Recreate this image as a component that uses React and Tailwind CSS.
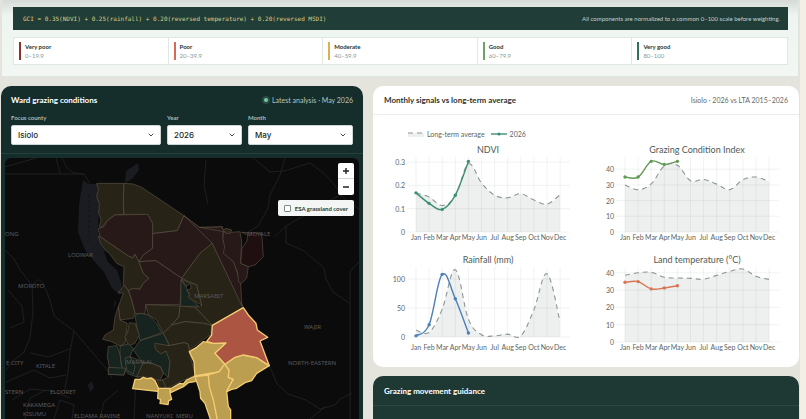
import { ChevronDown } from 'lucide-react';

const CLASSES = [
  { name: 'Very poor', range: '0–19.9', bar: 'bg-[#8f2f2f]' },
  { name: 'Poor', range: '20–39.9', bar: 'bg-[#d96a50]' },
  { name: 'Moderate', range: '40–59.9', bar: 'bg-[#dcb154]' },
  { name: 'Good', range: '60–79.9', bar: 'bg-[#6ba368]' },
  { name: 'Very good', range: '80–100', bar: 'bg-[#2f7159]' },
];

const MONTHS = ['Jan', 'Feb', 'Mar', 'Apr', 'May', 'Jun', 'Jul', 'Aug', 'Sep', 'Oct', 'Nov', 'Dec'];

const CHARTS = [
  {
    title: 'NDVI',
    color: '#3f8f74',
    zero: 89,
    unit: 233,
    ticks: [0, 0.1, 0.2, 0.3],
    average: [0.167, 0.15, 0.114, 0.155, 0.292, 0.21, 0.158, 0.147, 0.164, 0.137, 0.12, 0.16],
    current: [0.168, 0.123, 0.097, 0.158, 0.303],
  },
  {
    title: 'Grazing Condition Index',
    color: '#629a55',
    zero: 89,
    unit: 1.57,
    ticks: [0, 10, 20, 30, 40],
    average: [30, 27, 30.6, 42, 42.5, 32.7, 33.5, 30.5, 27, 33.3, 35, 32],
    current: [35, 35, 45, 43, 45],
  },
  {
    title: 'Rainfall (mm)',
    color: '#4a7fb8',
    zero: 84,
    unit: 0.58,
    ticks: [0, 50, 100],
    average: [12, 8, 48, 116, 31, 4, 2, 5, 2, 47, 109, 26],
    current: [2, 21, 108, 66, 7],
  },
  {
    title: 'Land temperature (°C)',
    color: '#d97552',
    zero: 89,
    unit: 1.73,
    ticks: [0, 10, 20, 30, 40],
    average: [38.6, 40, 40.3, 37.4, 37, 36.8, 36.3, 38.5, 40.8, 42.2, 38, 36.2],
    current: [34.5, 34.9, 30.7, 31.2, 32.5],
  },
];

const OLIVE = '#282317';
const BROWN = '#261917';
const GREEN = '#17231e';

// Ward outlines, drawn at three times the map scale
const WARDS = [
  [OLIVE, '50,40 132,40 130,100 132,133 105,135 88,145 75,160 68,170 58,172 63,150 56,130 58,100 50,80 55,60'],
  [OLIVE, '132,40 160,42 185,52 312,137 292,182 218,191 218,160 203,133 132,133 130,100'],
  [BROWN, '105,135 203,133 218,160 218,235 190,255 177,275 165,253 158,264 145,258 60,200 55,176 72,170 80,155'],
  [BROWN, '312,137 358,172 397,220 360,250 305,325 228,272 177,275 190,255 218,235 218,191 292,182'],
  [OLIVE, '55,198 60,200 145,258 158,264 165,253 177,275 190,310 207,325 190,340 180,358 160,355 145,362 130,345 132,290 110,280 88,250 75,240 62,220'],
  [BROWN, '177,275 228,272 305,325 300,404 197,404 195,432 165,430 155,390 145,362 160,355 180,358 190,340 207,325 190,310'],
  [OLIVE, '397,220 490,412 397,466 345,412 365,408 350,345 305,325 360,250'],
  [BROWN, '312,137 358,172 428,170 430,215 460,270 482,340 486,408 397,220'],
  [BROWN, '358,172 415,172 422,168 428,178 440,188 480,185 485,215 482,280 505,290 500,325 482,342 476,335 472,305 460,275 445,262 430,250 434,230 428,205 432,185'],
  [OLIVE, '430,180 438,175 455,180 450,190 438,190'],
  ['#200f11', '484,187 545,190 550,260 525,285 505,290 482,280 486,235 500,215 504,195'],
  [GREEN, '303,330 318,350 330,380 355,408 302,410'],
  [OLIVE, '305,328 350,345 365,405 340,392 325,382 330,372 320,362 334,355 330,340 318,350'],
  [OLIVE, '197,404 300,408 297,440 275,465 250,490 230,450 205,435'],
  [OLIVE, '300,408 345,412 397,466 370,460 315,455 275,465 297,440'],
  [OLIVE, '315,455 370,460 397,466 390,495 328,540 325,522 312,518 268,527 250,490 275,465'],
  [GREEN, '165,436 180,430 205,435 230,460 245,488 180,512 172,480'],
  [GREEN, '250,490 268,527 225,530 232,545 262,545 270,575 265,622 250,610 242,590 215,580 185,575 160,540 180,512'],
  [OLIVE, '225,520 268,527 312,518 325,522 328,545 342,600 345,615 260,655 245,630 265,622 270,575 258,543 242,552 225,535'],
  [OLIVE, '133,345 145,362 155,390 165,430 160,445 120,450 115,410 130,370 115,368'],
  [OLIVE, '115,410 120,450 142,460 135,520 120,528 95,515 68,508 75,495 100,480 105,440'],
  [OLIVE, '148,458 165,460 178,495 165,520 145,528 135,500 142,490'],
  [GREEN, '85,530 110,527 120,550 125,590 137,595 132,615 85,613 88,590 82,560'],
  [GREEN, '120,528 145,522 160,535 150,560 190,575 175,622 145,612 125,590 120,550'],
  [GREEN, '85,592 137,595 132,615 85,613'],
  [GREEN, '135,565 150,560 165,590 160,612 140,600'],
  [OLIVE, '190,577 215,580 242,592 250,610 240,632 205,622 170,620'],
  [OLIVE, '232,630 250,632 258,655 240,655'],
];

const FOCUS_WARDS = [
  ['#bb9e50', '165,628 180,628 190,622 200,626 215,624 225,632 240,665 158,656'],
  ['#bb9e50', '235,655 272,655 270,670 275,688 266,692 264,704 240,700 242,688 233,685'],
  ['#bb9e50', '270,657 300,640 310,642 320,630 345,618 405,608 358,622 345,635 325,638 310,650 272,668'],
  ['#bb9e50', '328,545 350,532 370,515 400,520 438,519 405,550 435,583 420,605 345,618 342,575'],
  ['#bb9e50', '345,620 385,615 390,650 405,690 412,750 392,750 375,700 362,685 360,665'],
  ['#bb9e50', '385,615 418,605 428,590 435,583 447,600 445,622 460,628 450,645 440,665 445,710 452,720 452,750 412,750 400,690 388,650'],
  ['#bb9e50', '435,583 465,562 490,555 530,563 568,587 530,610 515,632 495,638 470,655 455,658 440,665 450,645 460,628 445,622 447,600'],
  ['#ac5543', '490,413 505,435 528,460 532,480 563,502 540,513 568,587 530,563 490,555 465,562 435,583 405,550 438,519 400,520 380,514 395,495 397,466'],
];

const ROADS = [
  'M5 174H84M5 167L36 158M56 158L60 173M62 158C66 164 66 174 83 174M84 174L90 184',
  'M5 250L14 259L20 270L32 285L33 312L30 338L24 352L14 360L6 370',
  'M32 288C36 278 40 278 44 285L50 300L54 316L74 331L92 352L108 371L112 378',
  'M74 331L70 352L68 372L64 394M30 353L48 357L70 349M6 382L34 370L50 378L66 375M8 290L22 306L24 322L10 328',
  'M12 400L30 389L52 391L70 398M25 419L30 398L46 390M54 419L60 400L74 405L72 419M118 390L104 402L100 419M136 378L134 419',
  'M285 158L280 175L270 195L268 208L258 226L248 232M253 158L270 172L284 171L310 163L326 175L340 192',
  'M274 237L286 226L340 195L360 210M286 226V243L304 251L324 268L326 279L333 292L349 303M350 271V419M350 271L360 261',
  'M270 367L277 384L288 394L306 400L320 409L335 405L340 399L352 393M206 160L204 186L208 204M310 419L325 407',
];

const PLACES = [
  [68, 257, 'LODWAR'],
  [18, 288, 'MOROTO'],
  [5, 236, 'ONG'],
  [247, 236, 'MOYALE'],
  [194, 298, 'MARSABIT'],
  [304, 329, 'WAJIR'],
  [288, 365, 'NORTH-EASTERN'],
  [126, 364, 'MARALAL'],
  [6, 365, 'E CITY'],
  [36, 368, 'KITALE'],
  [5, 394, 'STERN'],
  [50, 394, 'ELDORET'],
  [23, 407, 'KAKAMEGA'],
  [23, 416, 'KISUMU'],
  [74, 418, 'ELDAMA RAVINE'],
  [146, 418, 'NANYUKI'],
  [176, 418, 'MERU'],
];

const STEP = 13.1;

// Smooth curve through every point
function curve(points) {
  return points.reduce((d, [x, y], i) => {
    if (i === 0) return `M${x} ${y}`;
    const before = points[i - 2] || points[i - 1];
    const prev = points[i - 1];
    const next = points[i + 1] || points[i];
    const k = 5.5;
    return `${d}C${prev[0] + (x - before[0]) / k} ${prev[1] + (y - before[1]) / k} ${x - (next[0] - prev[0]) / k} ${y - (next[1] - prev[1]) / k} ${x} ${y}`;
  }, '');
}

function SignalChart({ title, color, zero, unit, ticks, average, current }) {
  const toPoint = (value, i) => [20 + i * STEP, zero - value * unit];
  const averagePath = curve(average.map(toPoint));
  const currentPoints = current.map(toPoint);

  return (
    <svg viewBox="0 0 177 100" className="w-full overflow-visible" role="img" aria-label={title}>
      <text x="92" y="10" textAnchor="middle" className="fill-[#4f5b58] text-[9px]">{title}</text>
      <path d={`${averagePath}L${20 + 11 * STEP} ${zero}L20 ${zero}Z`} fill="#edf0ef" />
      {ticks.map((tick) => (
        <g key={tick}>
          <path d={`M11 ${zero - tick * unit}H174`} stroke="#1f3b36" strokeOpacity="0.09" strokeWidth="0.7" />
          <text x="9" y={zero - tick * unit + 3} textAnchor="end" className="fill-[#5c6664] text-[7px]">{tick}</text>
        </g>
      ))}
      {MONTHS.map((month, i) => (
        <g key={month}>
          <path d={`M${20 + i * STEP} 14V${zero}`} stroke="#1f3b36" strokeOpacity="0.09" strokeWidth="0.7" />
          <text x={20 + i * STEP} y="97" textAnchor="middle" className="fill-[#5c6664] text-[7px]">{month}</text>
        </g>
      ))}
      <path d={averagePath} fill="none" stroke="#8d9694" strokeWidth="1.1" strokeDasharray="5 4" />
      <path d={curve(currentPoints)} fill="none" stroke={color} strokeWidth="1.4" />
      {currentPoints.map(([x, y]) => (
        <circle key={x} cx={x} cy={y} r="1.7" fill={color} />
      ))}
    </svg>
  );
}

function WardMap() {
  return (
    <svg viewBox="5 158 354 261" preserveAspectRatio="xMinYMin slice" className="h-full w-full" role="img" aria-label="Ward map">
      <path d="M83 180L88 184H97L99 200L98 235L108 262L117 270L122 285L120 295L112 288L104 272L95 262L85 250L78 232L79 205ZM126 171L138 163L139 170L132 179L125 183ZM116 303L113 310L115 299ZM88 385L92 381L94 388L90 392Z" fill="#1b1c22" />
      <path d="M89 195V225L88 242" stroke="#15161a" strokeWidth="1.5" strokeDasharray="3 2" fill="none" />
      <path d={ROADS.join('')} fill="none" stroke="#25282a" strokeWidth="0.7" strokeLinejoin="round" />
      <g transform="translate(80 170) scale(0.3333)" strokeLinejoin="round">
        {WARDS.map(([fill, points]) => (
          <polygon key={points} points={points} fill={fill} stroke="#5f5746" strokeWidth="1.8" />
        ))}
        {FOCUS_WARDS.map(([fill, points]) => (
          <polygon key={points} points={points} fill={fill} stroke="#f3cc72" strokeWidth="4" />
        ))}
      </g>
      {PLACES.map(([x, y, name]) => (
        <text key={name} x={x} y={y} className="fill-[#5a5a5c] font-['Noto_Sans',sans-serif] text-[6px]">{name}</text>
      ))}
    </svg>
  );
}

function SelectField({ id, label, options }) {
  return (
    <div>
      <label htmlFor={id} className="block text-[6px] leading-[8px] font-bold text-[#a9bab4]">{label}</label>
      <div className="relative mt-[3px]">
        <select id={id} className="block h-5 w-full appearance-none rounded-xs border border-[#cdd6d2] bg-white px-1.5 font-['Inter',sans-serif] text-[8px] font-medium text-[#1d2b28]">
          {options.map((option) => (
            <option key={option}>{option}</option>
          ))}
        </select>
        <ChevronDown className="pointer-events-none absolute top-1.5 right-1.5 size-2 text-[#1d2b28]" strokeWidth={2.5} />
      </div>
    </div>
  );
}

function FormulaSection() {
  return (
    <section className="mx-px border border-t-0 border-[#dfe5df] bg-linear-to-b from-[#d5dcd8] via-[#eef4f0] via-20% to-[#f2f7f3] pt-[7px] pr-2.5 pb-[11px] pl-[11px]">
      <div className="flex h-[23px] items-center justify-between bg-[#213d38] pr-2 pl-2.5">
        <code className="font-['DejaVu_Sans_Mono',monospace] text-[6px] text-[#dccb83]">
          GCI = 0.35(NDVI) + 0.25(rainfall) + 0.20(reversed temperature) + 0.20(reversed MSDI)
        </code>
        <p className="text-[6px] text-[#c3cfca]">All components are normalized to a common 0–100 scale before weighting.</p>
      </div>
      <ul className="mt-[7px] grid grid-cols-5 divide-x divide-[#dfe8e2] border border-[#e0e8e3] bg-white">
        {CLASSES.map(({ name, range, bar }) => (
          <li key={name} className="flex gap-1 px-[5px] py-1">
            <span className={`w-0.5 ${bar}`} />
            <div>
              <p className="text-[6px] leading-[9px] font-bold text-[#1f3531]">{name}</p>
              <p className="text-[6px] leading-[9px] text-[#8c9794]">{range}</p>
            </div>
          </li>
        ))}
      </ul>
    </section>
  );
}

function MapPanel() {
  return (
    <section className="flex min-h-0 flex-col overflow-hidden rounded-t-[10px] bg-[#162e2b] px-1 text-white">
      <div className="px-1.5 pt-2 pb-2">
        <div className="flex h-3 items-center justify-between">
          <h2 className="text-[8px] font-bold">Ward grazing conditions</h2>
          <p className="flex items-center gap-1 text-[7px] text-[#b5c4bf]">
            <span className="size-1 rounded-full bg-[#79c7a3] ring-2 ring-[#79c7a3]/20" />
            Latest analysis · May 2026
          </p>
        </div>
        <div className="mt-2 grid grid-cols-[2fr_1fr_1.4fr] gap-1.5">
          <SelectField id="county" label="Focus county" options={['Isiolo', 'Marsabit', 'Samburu']} />
          <SelectField id="year" label="Year" options={['2026', '2025', '2024']} />
          <SelectField id="month" label="Month" options={['May', 'April', 'March']} />
        </div>
      </div>
      <div className="-mx-1 h-px bg-[#24423d]" />
      <div className="relative mt-1 min-h-0 flex-1 overflow-hidden rounded-t-md bg-[#0b0b0c]">
        <WardMap />
        <div className="absolute top-[5px] right-[5px] flex flex-col divide-y divide-gray-300 rounded-xs bg-white text-[#1f2326]">
          <button type="button" aria-label="Zoom in" className="flex size-4 items-center justify-center">
            <svg viewBox="0 0 8 8" className="size-2"><path d="M4 1V7M1 4H7" stroke="currentColor" strokeWidth="1.4" /></svg>
          </button>
          <button type="button" aria-label="Zoom out" className="flex size-4 items-center justify-center">
            <svg viewBox="0 0 8 8" className="size-2"><path d="M1 4H7" stroke="currentColor" strokeWidth="1.4" /></svg>
          </button>
        </div>
        <label className="absolute top-[42px] right-[5px] flex h-4 items-center gap-1 rounded-xs bg-[#f4f6f5] px-1.5 text-[6px] font-bold text-[#213d38]">
          <input type="checkbox" className="size-[7px] appearance-none rounded-[1px] border border-[#80888a] bg-white" />
          ESA grassland cover
        </label>
      </div>
    </section>
  );
}

function SignalsPanel() {
  return (
    <section className="rounded-[10px] bg-white">
      <div className="flex h-[29px] items-center justify-between border-b border-[#eceeec] px-[11px]">
        <h2 className="text-[8px] font-bold text-[#2a3533]">Monthly signals vs long-term average</h2>
        <p className="text-[7px] text-[#5f6a67]">Isiolo · 2026 vs LTA 2015–2026</p>
      </div>
      <div className="flex items-center gap-1.5 pt-3.5 pl-[35px] text-[7px] leading-[10px] text-[#5c6664]">
        <span className="flex items-center gap-[3px]">
          <svg viewBox="0 0 16 6" className="w-4"><path d="M0 2H16V6H0Z" fill="#edf0ef" /><path d="M0 2H16" stroke="#8d9694" strokeDasharray="5 4" /></svg>
          Long-term average
        </span>
        <span className="flex items-center gap-[3px]">
          <svg viewBox="0 0 16 6" className="w-4"><path d="M0 3H16" stroke="#3f8f74" strokeWidth="1.4" /><circle cx="8" cy="3" r="1.6" fill="#3f8f74" /></svg>
          2026
        </span>
      </div>
      <div className="grid grid-cols-2 gap-x-8 gap-y-2.5 pt-1 pr-[17px] pb-3.5 pl-[23px]">
        {CHARTS.map((chart) => (
          <SignalChart key={chart.title} {...chart} />
        ))}
      </div>
    </section>
  );
}

export default function App() {
  return (
    <div className="flex h-screen flex-col overflow-hidden border-r-[6px] border-[#f3efe6] bg-[#e5e4dc] font-['Lato','Liberation_Sans',sans-serif]">
      <FormulaSection />
      <main className="mt-[9px] grid min-h-0 flex-1 grid-cols-[362fr_426fr] gap-2.5 px-px">
        <MapPanel />
        <div className="flex flex-col gap-[9px]">
          <SignalsPanel />
          <section className="flex-1 rounded-t-[10px] bg-[#1e3834]">
            <h2 className="flex h-[30px] items-center border-b border-[#2c4742] px-[11px] text-[8px] font-bold text-white">Grazing movement guidance</h2>
          </section>
        </div>
      </main>
    </div>
  );
}
